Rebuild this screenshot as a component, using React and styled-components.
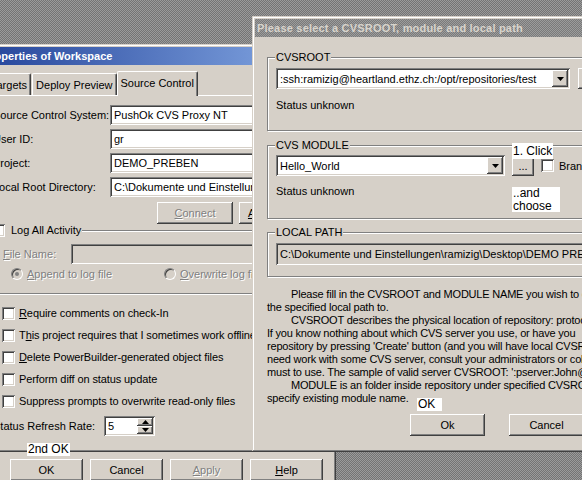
import React from 'react'
import styled, { createGlobalStyle, css } from 'styled-components'

const FACE = '#d6d0c8'

const GlobalStyle = createGlobalStyle`
  html, body { margin: 0; padding: 0; overflow: hidden; }
  body { font-family: "Liberation Sans", Arial, sans-serif; font-size: 11px; }
`

const raised = css`
  box-shadow: inset -1px -1px #404040, inset 1px 1px #fff, inset -2px -2px #808080, inset 2px 2px ${FACE};
`
const sunken = css`
  box-shadow: inset 1px 1px #808080, inset -1px -1px #fff, inset 2px 2px #404040, inset -2px -2px ${FACE};
`
const grayText = css`
  color: #808080;
  text-shadow: 1px 1px 0 #fff;
`

const Desktop = styled.div`
  position: relative;
  width: 582px;
  height: 480px;
  overflow: hidden;
  background-color: #878787;
  background-image: repeating-conic-gradient(#747474 0 25%, #9b9b9b 0 50%);
  background-size: 2px 2px;
  color: #000;
`

const Window = styled.div`
  position: absolute;
  left: ${p => p.$x}px;
  top: ${p => p.$y}px;
  width: ${p => p.$w}px;
  height: ${p => p.$h}px;
  box-sizing: border-box;
  padding: 3px;
  background: ${FACE};
  box-shadow: inset -1px -1px #404040, inset 1px 1px ${FACE}, inset -2px -2px #808080, inset 2px 2px #fff;
  overflow: hidden;
  display: flex;
  flex-direction: column;
`

const TitleBar = styled.div`
  flex: none;
  height: 18px;
  padding-left: 2px;
  display: flex;
  align-items: center;
  font-weight: bold;
  font-size: 11px;
  white-space: nowrap;
  ${p => p.$active ? css`
    background: linear-gradient(90deg, #24449a, #8aaee8);
    color: #fff;
  ` : css`
    background-color: #8a8a8a;
    background-image: repeating-conic-gradient(#7a7a7a 0 25%, #9c9c9c 0 50%);
    background-size: 2px 2px;
    color: #d8d4cc;
    letter-spacing: 0.2px;
  `}
`

/* property sheet */

const TabStrip = styled.div`
  display: flex;
  align-items: flex-end;
  height: 24px;
  margin: 6px 0 0 6px;
  position: relative;
  z-index: 1;
`

const Tab = styled.div`
  flex: none;
  box-sizing: border-box;
  height: ${p => (p.$selected ? 25 : 22)}px;
  margin: 0 ${p => (p.$selected ? '0 -1px -1px' : '1px 0 0')};
  padding: 0 3px ${p => (p.$selected ? 3 : 0)}px;
  display: flex;
  align-items: center;
  white-space: nowrap;
  background: ${FACE};
  border-top: 1px solid #fff;
  border-left: 1px solid #fff;
  border-right: 1px solid #404040;
  border-radius: 2px 2px 0 0;
  box-shadow: inset -1px 0 #808080;
`

const TabPanel = styled.div`
  box-sizing: border-box;
  height: 357px;
  margin: 0 4px 0 5px;
  padding: 9px 6px 0;
  border: 1px solid;
  border-color: #fff #404040 #404040 #fff;
  box-shadow: inset -1px -1px #808080;
`

const FormGrid = styled.div`
  display: grid;
  grid-template-columns: 117px 1fr;
  grid-auto-rows: 20px;
  row-gap: 4px;
  align-items: center;
`

const Label = styled.span`
  white-space: nowrap;
  ${p => p.$disabled && grayText}
`

const Field = styled.div`
  box-sizing: border-box;
  height: ${p => p.$h || 20}px;
  padding: 0 4px;
  line-height: ${p => p.$h || 20}px;
  white-space: nowrap;
  overflow: hidden;
  background: ${p => (p.$disabled ? FACE : '#fff')};
  ${sunken}
`

const ButtonRow = styled.div`
  display: flex;
  gap: ${p => p.$gap}px;
  margin-top: ${p => p.$top}px;
  padding-left: ${p => p.$left}px;
`

const Button = styled.div`
  flex: none;
  box-sizing: border-box;
  width: ${p => p.$w}px;
  height: 22px;
  display: flex;
  align-items: center;
  justify-content: center;
  white-space: nowrap;
  background: ${FACE};
  ${raised}
  ${p => p.$disabled && grayText}
`

const U = styled.span`
  text-decoration: underline;
`

const GroupBox = styled.div`
  margin: ${p => p.$margin || '0'};
  padding: ${p => p.$pad};
  border: 1px solid #808080;
  box-shadow: inset 1px 1px #fff, 1px 1px #fff;
`

const GroupTitle = styled.div`
  display: flex;
  align-items: center;
  gap: 6px;
  width: fit-content;
  height: 14px;
  margin: -8px 0 0 ${p => p.$left}px;
  padding: 0 1px;
  background: ${FACE};
  white-space: nowrap;
`

const CheckBox = styled.span`
  flex: none;
  box-sizing: border-box;
  width: 13px;
  height: 13px;
  background: #fff;
  ${sunken}
`

const Radio = styled.span`
  flex: none;
  box-sizing: border-box;
  width: 12px;
  height: 12px;
  border-radius: 50%;
  border: 1px solid;
  border-color: #808080 #fff #fff #808080;
  background: ${FACE};
  box-shadow: inset 1px 1px #404040;
  display: flex;
  align-items: center;
  justify-content: center;
  &::after {
    content: '';
    display: ${p => (p.$checked ? 'block' : 'none')};
    width: 4px;
    height: 4px;
    border-radius: 50%;
    background: #808080;
  }
`

const FileRow = styled.div`
  display: grid;
  grid-template-columns: 68px 1fr;
  align-items: center;
  margin-top: 7px;
`

const RadioRow = styled.div`
  display: grid;
  grid-template-columns: 153px 1fr;
  margin: 4px 0 0 8px;
  height: 12px;
`

const Option = styled.label`
  display: flex;
  align-items: center;
  gap: ${p => p.$gap || 4}px;
  height: ${p => p.$h || 12}px;
  white-space: nowrap;
  ${p => p.$disabled && grayText}
`

const CheckList = styled.div`
  display: flex;
  flex-direction: column;
  gap: 6px;
  margin-top: 11px;
  padding-left: 9px;
  letter-spacing: -0.1px;
`

const RateRow = styled.div`
  display: grid;
  grid-template-columns: 111px 51px;
  align-items: center;
  margin-top: 7px;
`

const Spin = styled.div`
  box-sizing: border-box;
  height: 20px;
  padding: 2px 2px 2px 4px;
  display: flex;
  align-items: center;
  justify-content: space-between;
  background: #fff;
  ${sunken}
`

const SpinButtons = styled.div`
  display: flex;
  flex-direction: column;
  width: 16px;
  height: 16px;
`

const SpinButton = styled.div`
  flex: 1;
  display: flex;
  align-items: center;
  justify-content: center;
  background: ${FACE};
  ${raised}
`

/* repository chooser */

const DialogBody = styled.div`
  padding: 20px 0 0 12px;
`

const ComboRow = styled.div`
  display: flex;
  align-items: center;
  gap: ${p => p.$gap}px;
  margin-top: ${p => p.$top}px;
`

const Combo = styled.div`
  flex: none;
  box-sizing: border-box;
  width: ${p => p.$w}px;
  height: 21px;
  padding: 2px 2px 2px 4px;
  display: flex;
  align-items: center;
  justify-content: space-between;
  white-space: nowrap;
  background: #fff;
  ${sunken}
`

const DropButton = styled.div`
  flex: none;
  width: 16px;
  height: 17px;
  display: flex;
  align-items: center;
  justify-content: center;
  background: ${FACE};
  ${raised}
`

const SmallButton = styled(Button)`
  height: 21px;
`

const StatusText = styled.div`
  margin-top: ${p => p.$top}px;
  line-height: 13px;
  white-space: nowrap;
`

const HelpText = styled.div`
  margin-top: 11px;
  line-height: 13px;
  letter-spacing: -0.2px;
`

const Line = styled.div`
  white-space: nowrap;
  padding-left: ${p => (p.$indent ? 24 : 0)}px;
`

const Callout = styled.div`
  position: absolute;
  left: ${p => p.$x}px;
  top: ${p => p.$y}px;
  width: ${p => p.$w}px;
  height: ${p => p.$h}px;
  padding-left: 1px;
  box-sizing: border-box;
  background: #fff;
  font-size: 12px;
  line-height: ${p => p.$lh || p.$h}px;
  white-space: nowrap;
`

const Arrow = ({ up }) => (
  <svg width="7" height="4" viewBox="0 0 7 4">
    <polygon points={up ? '3.5,0 7,4 0,4' : '0,0 7,0 3.5,4'} fill="#000" />
  </svg>
)

const sheetOptions = [
  [<><U>R</U>equire comments on check-In</>],
  [<>T<U>h</U>is project requires that I sometimes work offline</>],
  [<><U>D</U>elete PowerBuilder-generated object files</>],
  [<>Perform diff on status update</>],
  [<>Suppress prompts to overwrite read-only files</>],
]

const helpLines = [
  [true, 'Please fill in the CVSROOT and MODULE NAME you wish to checkout into'],
  [false, 'the specified local path to.'],
  [true, 'CVSROOT describes the physical location of repository: protocol,'],
  [false, 'If you know nothing about which CVS server you use, or have you'],
  [false, "repository by pressing 'Create' button (and you will have local CVSROOT)."],
  [false, 'need work with some CVS server, consult your administrators or colleagues'],
  [false, "must to use. The sample of valid server CVSROOT: ':pserver:John@host'"],
  [true, 'MODULE is an folder inside repository under specified CVSROOT.'],
  [false, 'specify existing module name.'],
]

const App = () => {
  return (
    <>
      <GlobalStyle />
      <Desktop>
        <Window $x={-22} $y={44} $w={358} $h={460}>
          <TitleBar $active>Properties of Workspace</TitleBar>
          <TabStrip>
            <Tab>Targets</Tab>
            <Tab>Deploy Preview</Tab>
            <Tab $selected>Source Control</Tab>
          </TabStrip>
          <TabPanel>
            <FormGrid>
              <Label>Source Control System:</Label>
              <Field>PushOk CVS Proxy NT</Field>
              <Label>User ID:</Label>
              <Field>gr</Field>
              <Label>Project:</Label>
              <Field>DEMO_PREBEN</Field>
              <Label>Local Root Directory:</Label>
              <Field>C:\Dokumente und Einstellungen</Field>
            </FormGrid>
            <ButtonRow $top={5} $left={164} $gap={6}>
              <Button $w={76} $disabled><U>C</U>onnect</Button>
              <Button $w={76}><U>A</U>dvanced...</Button>
            </ButtonRow>
            <GroupBox $margin="6px 0 0 -5px" $pad="0 0 13px 14px">
              <GroupTitle $left={-12}>
                <CheckBox />
                Log All Activity
              </GroupTitle>
              <FileRow>
                <Label $disabled><U>F</U>ile Name:</Label>
                <Field $disabled />
              </FileRow>
              <RadioRow>
                <Option $disabled><Radio $checked /><span><U>A</U>ppend to log file</span></Option>
                <Option $disabled><Radio /><span><U>O</U>verwrite log file</span></Option>
              </RadioRow>
            </GroupBox>
            <CheckList>
              {sheetOptions.map(([text], i) => (
                <Option key={i} $h={16}>
                  <CheckBox />
                  <span>{text}</span>
                </Option>
              ))}
            </CheckList>
            <RateRow>
              <Label>Status Refresh Rate:</Label>
              <Spin>
                5
                <SpinButtons>
                  <SpinButton><Arrow up /></SpinButton>
                  <SpinButton><Arrow /></SpinButton>
                </SpinButtons>
              </Spin>
            </RateRow>
          </TabPanel>
          <ButtonRow $top={7} $left={29} $gap={7}>
            <Button $w={73}>OK</Button>
            <Button $w={73}>Cancel</Button>
            <Button $w={73} $disabled><U>A</U>pply</Button>
            <Button $w={73}><U>H</U>elp</Button>
          </ButtonRow>
        </Window>

        <Window $x={252} $y={16} $w={345} $h={436}>
          <TitleBar>Please select a CVSROOT, module and local path</TitleBar>
          <DialogBody>
            <GroupBox $pad="0 0 18px 8px">
              <GroupTitle $left={-1}>CVSROOT</GroupTitle>
              <ComboRow $top={4} $gap={8}>
                <Combo $w={294}>
                  :ssh:ramizig@heartland.ethz.ch:/opt/repositories/test
                  <DropButton><Arrow /></DropButton>
                </Combo>
                <SmallButton $w={60}>Edit...</SmallButton>
              </ComboRow>
              <StatusText $top={10}>Status unknown</StatusText>
            </GroupBox>
            <GroupBox $margin="14px 0 0" $pad="0 0 20px 8px">
              <GroupTitle $left={-1}>CVS MODULE</GroupTitle>
              <ComboRow $top={3} $gap={7}>
                <Combo $w={229}>
                  Hello_World
                  <DropButton><Arrow /></DropButton>
                </Combo>
                <SmallButton $w={22}>...</SmallButton>
                <Option $h={13} $gap={5}><CheckBox />Branch</Option>
              </ComboRow>
              <StatusText $top={9}>Status unknown</StatusText>
            </GroupBox>
            <GroupBox $margin="13px 0 0" $pad="0 0 11px 8px">
              <GroupTitle $left={-1}>LOCAL PATH</GroupTitle>
              <ComboRow $top={4} $gap={0}>
                <Field $disabled $h={22} style={{ flex: 1 }}>
                  C:\Dokumente und Einstellungen\ramizig\Desktop\DEMO PREBEN
                </Field>
              </ComboRow>
            </GroupBox>
            <HelpText>
              {helpLines.map(([indent, text], i) => (
                <Line key={i} $indent={indent}>{text}</Line>
              ))}
            </HelpText>
            <ButtonRow $top={9} $left={143} $gap={24}>
              <Button $w={75}>Ok</Button>
              <Button $w={75}>Cancel</Button>
            </ButtonRow>
          </DialogBody>
        </Window>

        <Callout $x={512} $y={143} $w={41} $h={16}>1. Click</Callout>
        <Callout $x={512} $y={187} $w={48} $h={25} $lh={12.5}>..and<br />choose</Callout>
        <Callout $x={417} $y={398} $w={25} $h={13}>OK</Callout>
        <Callout $x={27} $y={443} $w={43} $h={13}>2nd OK</Callout>
      </Desktop>
    </>
  )
}

export default App
